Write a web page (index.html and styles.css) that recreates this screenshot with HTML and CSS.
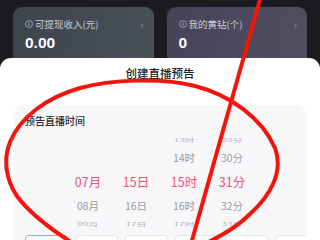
FILE: index.html
```html
<!DOCTYPE html>
<html lang="zh">
<head>
<meta charset="utf-8">
<link rel="stylesheet" href="styles.css">
</head>
<body>
<div class="stats">
  <div class="stat stat-income">
    <div class="stat-head">
      <svg class="info" viewBox="0 0 10 10" width="8" height="8"><circle cx="5" cy="5" r="4.3" fill="none" stroke="#b9bec5" stroke-width="0.9"/><rect x="4.5" y="4.2" width="1" height="3.2" fill="#b9bec5"/><rect x="4.5" y="2.5" width="1" height="1" fill="#b9bec5"/></svg>
      <span class="stat-label">可提现收入(元)</span>
      <span class="chev">›</span>
    </div>
    <div class="stat-value">0.00</div>
    <div class="stat-btn"></div>
  </div>
  <div class="stat stat-diamond">
    <div class="stat-head">
      <svg class="info" viewBox="0 0 10 10" width="8" height="8"><circle cx="5" cy="5" r="4.3" fill="none" stroke="#bdbac8" stroke-width="0.9"/><rect x="4.5" y="4.2" width="1" height="3.2" fill="#bdbac8"/><rect x="4.5" y="2.5" width="1" height="1" fill="#bdbac8"/></svg>
      <span class="stat-label">我的黄钻(个)</span>
      <span class="chev">›</span>
    </div>
    <div class="stat-value">0</div>
    <div class="stat-btn"></div>
  </div>
</div>

<div class="sheet">
  <div class="sheet-title">创建直播预告</div>
  <div class="sheet-body">
    <div class="time-card">
      <div class="time-label">预告直播时间</div>
      <div class="picker">
        <div class="col">
          <div class="cell far"></div>
          <div class="cell near"></div>
          <div class="cell sel">07月</div>
          <div class="cell near">08月</div>
          <div class="cell far"><span>09月</span></div>
        </div>
        <div class="col">
          <div class="cell far"></div>
          <div class="cell near"></div>
          <div class="cell sel">15日</div>
          <div class="cell near">16日</div>
          <div class="cell far"><span>17日</span></div>
        </div>
        <div class="col">
          <div class="cell far"><span>13时</span></div>
          <div class="cell near">14时</div>
          <div class="cell sel">15时</div>
          <div class="cell near">16时</div>
          <div class="cell far"><span>17时</span></div>
        </div>
        <div class="col">
          <div class="cell far"><span>29分</span></div>
          <div class="cell near">30分</div>
          <div class="cell sel">31分</div>
          <div class="cell near">32分</div>
          <div class="cell far"><span>33分</span></div>
        </div>
      </div>
      <div class="chips">
        <div class="chip active"></div>
        <div class="chip"></div>
        <div class="chip"></div>
        <div class="chip"></div>
        <div class="chip"></div>
        <div class="chip"></div>
      </div>
    </div>
  </div>
</div>

<svg class="scribble" width="320" height="240" viewBox="0 0 320 240">
  <path d="M261,-4 L191,244" fill="none" stroke="#f5140c" stroke-width="4" stroke-linecap="round"/>
  <path d="M74,244 C52,230 30,214 17,196 C6,180 3,160 10,142 C20,118 45,98 80,88 C110,80 160,77 195,86 C230,95 262,118 275,148 C284,172 270,196 250,214 C236,228 218,238 200,246" fill="none" stroke="#f5140c" stroke-width="4" stroke-linecap="round"/>
</svg>
</body>
</html>
```

FILE: styles.css
```css
* { box-sizing: border-box; }
html, body {
  margin: 0;
  padding: 0;
  width: 320px;
  height: 240px;
  overflow: hidden;
  background: #1c1c20;
  font-family: "Noto Sans CJK SC", "Liberation Sans", sans-serif;
}
.stats {
  display: flex;
  gap: 13px;
  padding: 7px 13px 0 13px;
}
.stat {
  width: 141px;
  height: 66px;
  border-radius: 9px;
  padding: 11px 10px 0 12px;
}
.stat-income { background: linear-gradient(100deg, #3d444d, #4a5159); }
.stat-diamond { background: linear-gradient(100deg, #46435a, #524f61); }
.stat-head {
  display: flex;
  align-items: center;
  height: 12px;
  color: #c9ccd2;
}
.info { flex: none; margin-right: 2px; }
.stat-label {
  font-size: 9.5px;
  line-height: 12px;
  flex: 1;
}
.chev {
  font-size: 11px;
  color: #8d939b;
  line-height: 12px;
}
.stat-value {
  margin-top: 4px;
  font-family: "Liberation Sans", "Noto Sans", sans-serif;
  font-weight: bold;
  font-size: 15.5px;
  line-height: 18px;
  color: #ffffff;
}
.stat-btn {
  margin-top: 8px;
  width: 28px;
  height: 12px;
  border-radius: 6px;
  background: rgba(255,255,255,0.12);
}
.sheet {
  position: absolute;
  top: 58px;
  left: 0;
  right: 0;
  bottom: 0;
  background: #ffffff;
  border-radius: 11px 11px 0 0;
  overflow: hidden;
}
.sheet-title {
  text-align: center;
  font-size: 11.5px;
  line-height: 16px;
  padding-top: 7px;
  height: 32px;
  color: #222222;
  font-weight: 500;
}
.sheet-body {
  padding: 15px 14px 0 14px;
}
.time-card {
  background: #f7f7fa;
  border-radius: 9px;
  padding: 9px 0 0 11px;
  overflow: hidden;
  height: 160px;
}
.time-label {
  font-size: 10px;
  line-height: 13px;
  color: #2b2b2b;
  font-weight: 500;
}
.picker {
  display: grid;
  grid-template-columns: repeat(4, 48px);
  margin: 6px 0 0 39px;
}
.col {
  display: flex;
  flex-direction: column;
}
.cell {
  text-align: center;
  white-space: nowrap;
}
.cell.far {
  height: 14px;
  font-size: 10px;
  line-height: 14px;
  color: #b5b5b8;
}
.cell.far span {
  display: inline-block;
  transform: scaleY(0.5);
}
.cell.near {
  height: 22px;
  font-size: 10.5px;
  line-height: 22px;
  color: #9a9a9d;
}
.cell.sel {
  height: 26px;
  font-size: 12.5px;
  line-height: 26px;
  color: #f4507c;
}
.chips {
  display: flex;
  gap: 7px;
  margin-top: 4px;
}
.chip {
  flex: none;
  width: 43px;
  height: 20px;
  border-radius: 4px;
  border: 1px solid #e4e4e8;
  background: #ffffff;
}
.chip.active {
  border-color: #f2859f;
}
.scribble {
  position: absolute;
  top: 0;
  left: 0;
  pointer-events: none;
}
```
